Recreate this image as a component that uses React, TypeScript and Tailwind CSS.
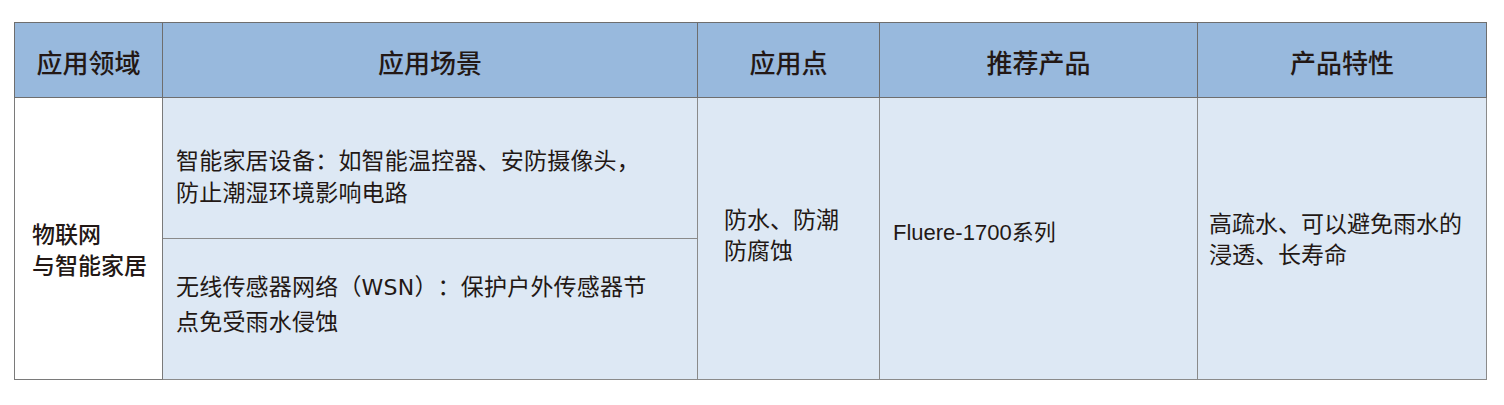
const ink = "text-[#231815]";

export default function App() {
  return (
    <div className="w-[1504px] h-[405px] bg-white pt-[22px] pl-[14px] font-['Noto_Sans_CJK_SC','Noto_Sans',sans-serif] [text-spacing-trim:space-all]">
      <table className={`table-fixed border-collapse w-[1473px] ${ink}`}>
        <colgroup>
          <col className="w-[148px]" />
          <col className="w-[535px]" />
          <col className="w-[182px]" />
          <col className="w-[318px]" />
          <col className="w-[289px]" />
        </colgroup>
        <thead>
          <tr className="h-[75px] bg-[#98b9dd] text-[26px] font-medium">
            {["应用领域", "应用场景", "应用点", "推荐产品", "产品特性"].map((h) => (
              <th key={h} className="border border-[#6e6e6e] text-center align-middle pt-[2px] font-medium">
                {h}
              </th>
            ))}
          </tr>
        </thead>
        <tbody className="text-[23px] leading-[32px]">
          <tr className="h-[141px]">
            <td rowSpan={2} className="border border-[#7a7a7a] bg-white pl-[17px] pt-[20px] font-medium leading-[31px]">
              物联网
              <br />
              与智能家居
            </td>
            <td className="border border-[#8a8a8a] bg-[#dde8f4] pl-[13px] pt-[13px] tracking-[0.2px]">
              智能家居设备：如智能温控器、安防摄像头，
              <br />
              防止潮湿环境影响电路
            </td>
            <td rowSpan={2} className="border border-[#8a8a8a] bg-[#dde8f4] pl-[26px] pb-[9px] leading-[31px]">
              防水、防潮
              <br />
              防腐蚀
            </td>
            <td rowSpan={2} className="border border-[#8a8a8a] bg-[#dde8f4] pl-[13px] pb-[12px] font-['Liberation_Sans','Noto_Sans_CJK_SC',sans-serif] text-[22px]">
              Fluere-1700系列
            </td>
            <td rowSpan={2} className="border border-[#8a8a8a] bg-[#dde8f4] pl-[11px] pb-[2px] leading-[31px]">
              高疏水、可以避免雨水的
              <br />
              浸透、长寿命
            </td>
          </tr>
          <tr className="h-[141px]">
            <td className="border border-[#8a8a8a] bg-[#dde8f4] pl-[13px] pb-[14px] tracking-[0.2px]">
              无线传感器网络（<span className="font-['DejaVu_Sans',sans-serif] text-[22px]">WSN</span>）：保护户外传感器节
              <br />
              点免受雨水侵蚀
            </td>
          </tr>
        </tbody>
      </table>
    </div>
  );
}
